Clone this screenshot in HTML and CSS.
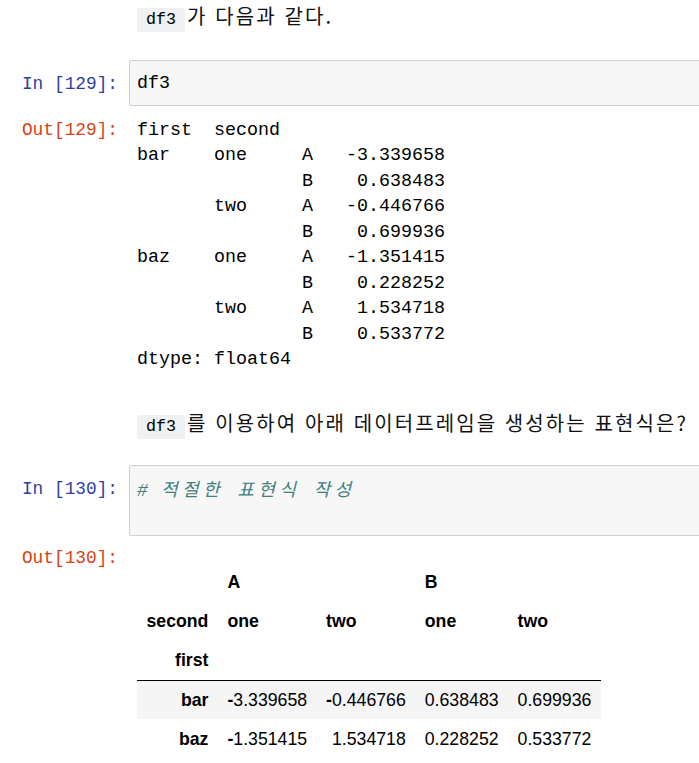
FILE: index.html
```html
<!DOCTYPE html>
<html lang="ko">
<head>
<meta charset="utf-8">
<title>df3</title>
<link rel="stylesheet" href="styles.css">
</head>
<body>
<div class="nb">
  <div class="md md-first"><p><code>df3</code>가 다음과 같다.</p></div>

  <div class="cell code-cell first-code">
    <div class="prompt in">In&nbsp;[129]:</div>
    <div class="input"><pre>df3</pre></div>
  </div>

  <div class="cell out-cell">
    <div class="prompt out">Out[129]:</div>
    <pre class="output">first  second
bar    one     A   -3.339658
               B    0.638483
       two     A   -0.446766
               B    0.699936
baz    one     A   -1.351415
               B    0.228252
       two     A    1.534718
               B    0.533772
dtype: float64</pre>
  </div>

  <div class="md md-second"><p><code>df3</code>를 이용하여 아래 데이터프레임을 생성하는 표현식은?</p></div>

  <div class="cell code-cell second-code">
    <div class="prompt in">In&nbsp;[130]:</div>
    <div class="input tall"><pre><span class="comment">#&nbsp;<span class="ko">적절한</span> <span class="ko">표현식</span> <span class="ko">작성</span></span></pre></div>
  </div>

  <div class="cell out-cell table-out">
    <div class="prompt out">Out[130]:</div>
    <div class="output-html">
      <table class="df">
        <thead>
          <tr><th></th><th colspan="2" class="l">A</th><th colspan="2" class="l">B</th></tr>
          <tr><th>second</th><th class="l">one</th><th class="l">two</th><th class="l">one</th><th class="l">two</th></tr>
          <tr class="last"><th>first</th><th></th><th></th><th></th><th></th></tr>
        </thead>
        <tbody>
          <tr class="odd"><th>bar</th><td><b>-</b>3.339658</td><td><b>-</b>0.446766</td><td>0.638483</td><td>0.699936</td></tr>
          <tr><th>baz</th><td><b>-</b>1.351415</td><td>1.534718</td><td>0.228252</td><td>0.533772</td></tr>
        </tbody>
      </table>
    </div>
  </div>
</div>
</body>
</html>
```

FILE: styles.css
```css
html, body {
  margin: 0;
  padding: 0;
  background: #ffffff;
  overflow: hidden;
}

body {
  font-family: "Noto Sans CJK KR", "Noto Sans", sans-serif;
  color: #000000;
}

.nb {
  padding-top: 3px;
}

.md {
  padding-left: 137px;
}

.md p {
  margin: 0;
  font-size: 20px;
  line-height: 26px;
  height: 26px;
  letter-spacing: 2.1px;
  white-space: nowrap;
  color: #111;
}

.md code {
  font-family: "Liberation Mono", monospace;
  font-size: 16.7px;
  letter-spacing: 0;
  background: #eff0f1;
  padding: 2px 9px 3px 9px;
  border-radius: 2px;
  margin-right: 2px;
  color: #000;
}

.md-second {
  margin-top: 37px;
}

.cell {
  display: flex;
  align-items: flex-start;
}

.first-code {
  margin-top: 31px;
}

.second-code {
  margin-top: 29px;
}

.out-cell {
  margin-top: 10px;
}

.out-cell.table-out {
  margin-top: 8px;
}

.prompt {
  flex: none;
  width: 129px;
  box-sizing: border-box;
  padding-right: 11px;
  text-align: right;
  font-family: "Liberation Mono", monospace;
  font-size: 17.8px;
  line-height: 25.5px;
  white-space: nowrap;
}

.in {
  color: #303f9f;
  padding-top: 12px;
}

.out {
  color: #d84315;
  padding-top: 2px;
}

.input {
  flex: none;
  width: 600px;
  border: 1px solid #cfcfcf;
  border-radius: 2px;
  background: #f7f7f7;
  padding: 10px 7px 8px 7px;
}

.input.tall {
  padding: 10px 7px 8px 7px;
}

.input.tall pre {
  min-height: 51px;
}

pre {
  margin: 0;
  font-family: "Liberation Mono", "Noto Sans CJK KR", monospace;
  font-size: 18.33px;
  line-height: 25.5px;
  letter-spacing: 0;
  white-space: pre;
  color: #000;
}

.output {
  padding-left: 8px;
  padding-top: 2px;
}

.comment {
  color: #408080;
  font-style: italic;
}

.comment .ko {
  font-family: "Noto Sans CJK KR", sans-serif;
  font-size: 18px;
  letter-spacing: 4.5px;
  padding-left: 2px;
}

.output-html {
  padding-left: 8px;
  padding-top: 19px;
}

.df {
  border-collapse: collapse;
  border-spacing: 0;
  font-family: "Liberation Sans", Arial, sans-serif;
  font-size: 17.7px;
  line-height: 20px;
  color: #000;
}

.df th,
.df td {
  padding: 9.5px 9.5px;
  text-align: right;
  vertical-align: middle;
  white-space: nowrap;
}

.df th {
  font-weight: bold;
}

.df th.l {
  text-align: left;
}

.df thead {
  border-bottom: 1px solid #000;
}

.df tbody th,
.df tbody td {
  padding-top: 9.5px;
  padding-bottom: 9px;
}

.df tbody tr.odd {
  background: #f5f5f5;
}

.df td b {
  font-weight: bold;
}
```
